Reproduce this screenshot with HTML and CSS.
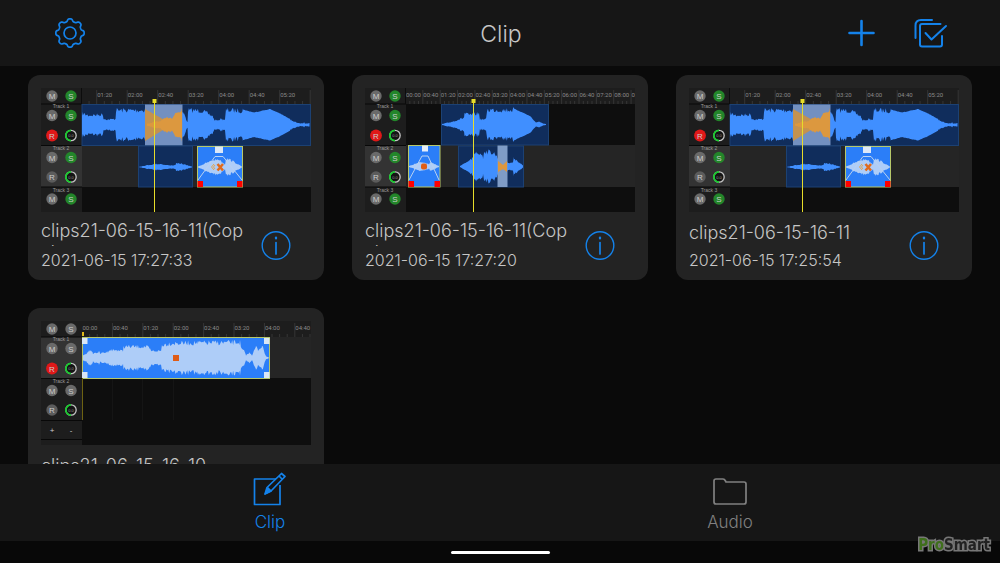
FILE: index.html
```
<!DOCTYPE html>
<html lang="en">
<head>
  <meta charset="UTF-8">
  <meta name="viewport" content="width=device-width, initial-scale=1.0">
  <title>Clip</title>
  <link rel="stylesheet" href="styles.css">
</head>
<body>
  <!-- shared drawings -->
  <svg class="defs" aria-hidden="true">
    <defs>
      <g id="btn-m"><circle r="5.7" fill="#6a6a6a"/><text class="btn-text" y="3">M</text></g>
      <g id="btn-s-off"><circle r="5.7" fill="#6a6a6a"/><text class="btn-text" y="3">S</text></g>
      <g id="btn-s"><circle r="5.7" fill="#23862a"/><text class="btn-text" y="3">S</text></g>
      <g id="btn-r"><circle r="5.7" fill="#5c5c5c"/><text class="btn-text" y="3">R</text></g>
      <g id="btn-rec"><circle r="5.9" fill="#e01818"/><text class="btn-text" y="3">R</text></g>
      <g id="knob">
        <circle r="5.2" fill="#141414" stroke="#c4c4c4" stroke-width="1.3"/>
        <path d="M0 5.2A5.2 5.2 0 0 1 0-5.2" fill="none" stroke="#16cc2c" stroke-width="1.7"/>
        <text class="knob-text" y="1.5">0.0</text>
      </g>
      <g id="info">
        <circle cx="15" cy="14.5" r="13.8" stroke-width="1.4"/>
        <path d="M15 11.5V23" stroke-width="1.7"/>
        <path d="M15 6.5V7.5" stroke-width="2.2"/>
      </g>

      <g id="heads">
        <rect width="41" height="124" fill="#1d1d1d"/>
        <rect y="57" width="41" height="42" fill="#333"/>
        <path d="M0 16H41M0 57.5H41M0 99H41" stroke="#080808"/>
        <path d="M40.5 0V16" stroke="#0c0c0c"/>
        <use href="#btn-m" x="11" y="8"/><use href="#btn-s" x="30" y="8"/>
        <text class="track" x="20" y="20">Track 1</text>
        <use href="#btn-m" x="11" y="27.5"/><use href="#btn-s" x="30" y="27.5"/>
        <use href="#btn-rec" x="11" y="47.5"/><use href="#knob" x="30" y="47.5"/>
        <text class="track" x="20" y="62">Track 2</text>
        <use href="#btn-m" x="11" y="69.5"/><use href="#btn-s" x="30" y="69.5"/>
        <use href="#btn-r" x="11" y="89"/><use href="#knob" x="30" y="89"/>
        <text class="track" x="20" y="104">Track 3</text>
        <use href="#btn-m" x="11" y="111"/><use href="#btn-s" x="30" y="111"/>
      </g>

      <g id="project-a">
        <rect width="270" height="124" fill="#1d1d1d"/>
        <rect x="41" y="57" width="229" height="42" fill="#252525"/>
        <rect x="41" y="99" width="229" height="25" fill="#0e0e0e"/>
        <use href="#heads"/>
        <g class="ruler" data-start="55.7" data-step="30.5" data-from="80" data-count="8" data-max="320"></g>
        <rect class="clip" x="41" y="16.5" width="228.5" height="41"/>
        <path class="wave" data-mid="36.8" data-env="41,13 48,11 62,12 62.5,7 68,6 74.5,7 75,17 104,17"/>
        <path class="wave" data-mid="36.8" data-env="141,15 143,13 145,7 146.5,3 147,17 161,16.5 172,10 173,6 176,5 180,7 184,6 185,17 202,16.5"/>
        <path class="wave" data-smooth data-mid="36.8" data-env="202,15.5 213,12.5 229,16 239,11.5 249,6"/>
        <path class="wave" data-mid="36.8" data-env="249,6 253,4 256,2 262,1.5 263,3 264,1.5 268.5,2"/>
        <rect x="104" y="16.5" width="37.5" height="41" fill="#7390c0"/>
        <path d="M104 21L127 34V39L104 53Z" fill="#c4924f"/>
        <path class="wave fade" data-mid="36.8" data-env="106,1 112,3 118,4 122,6 128,9 131,8 134,13 141,17"/>
        <rect class="clip" x="97.5" y="58" width="54" height="41"/>
        <path class="wave" data-mid="79" data-env="98,.3 106,2 115,3.5 121,3.5 123,2.5 128,2 134,2 135,4 140,4 151,.5"/>
        <rect class="clip picked" x="156.5" y="58.5" width="45" height="40.5"/>
        <path class="wave light" data-mid="79" data-env="157,.5 164,4 172,8 178,9 183,4 184,3 185,10 190,8 201,.5"/>
        <path class="envelope" d="M157 92L174 68.5H182L201 92"/>
        <rect x="174" y="58.5" width="8" height="6.5" fill="#dce8f8"/>
        <rect x="156.5" y="93" width="5.5" height="6" fill="#f00"/>
        <rect x="196" y="93" width="5.5" height="6" fill="#f00"/>
        <path d="M173 76l-2.5 3l2.5 3m1-5l-1.5 2l1.5 2" fill="none" stroke="#e2a551"/>
        <path d="M176.5 76l5.5 6.500m-5.5 0l5.5-6.5" fill="none" stroke="#e06a1c" stroke-width="2.5"/>
        <g class="playhead"><path d="M113 14h1V124h-1z"/><rect x="111.5" y="11" width="4" height="4"/></g>
      </g>
    </defs>
  </svg>

  <header class="topbar">
    <button class="icon-btn" aria-label="Settings">
      <svg width="30" height="30" viewBox="0 0 30 30"><path id="gear" d=""/><circle cx="15" cy="15" r="6"/></svg>
    </button>
    <h1>Clip</h1>
    <div class="actions">
      <button class="icon-btn" aria-label="Add">
        <svg width="26" height="30" viewBox="0 0 26 30"><path d="M13.500 3V27M1.500 15H25.500" stroke-width="2.6"/></svg>
      </button>
      <button class="icon-btn" aria-label="Select">
        <svg width="34" height="30" viewBox="0 0 34 30"><path d="M2.500 20V7.500Q2.500 2 8 2H19M27.500 6H9Q7 6 7 8V26.500Q7 28.500 9 28.500H27Q29 28.500 29 26.500V18M12.500 15L18.500 21.500L33 8" stroke-width="2"/></svg>
      </button>
    </div>
  </header>

  <main class="clips">
    <article class="card">
      <svg class="preview" viewBox="0 0 270 124"><use href="#project-a"/></svg>
      <div class="info">
        <div class="labels">
          <h2>clips21-06-15-16-11(Copy)</h2>
          <time>2021-06-15 17:27:33</time>
        </div>
        <button class="icon-btn" aria-label="Info"><svg width="30" height="30"><use href="#info"/></svg></button>
      </div>
    </article>

    <article class="card">
      <svg class="preview" viewBox="0 0 270 124">
        <rect width="270" height="124" fill="#1d1d1d"/>
        <rect x="41" y="16" width="229" height="41" fill="#0e0e0e"/>
        <rect x="41" y="57" width="229" height="42" fill="#252525"/>
        <rect x="41" y="99" width="229" height="25" fill="#0e0e0e"/>
        <use href="#heads"/>
        <g class="ruler tight" data-start="40.5" data-step="17.35" data-from="0" data-count="14" data-max="520"></g>
        <rect class="clip" x="76.5" y="16.5" width="107" height="40.5"/>
        <path class="wave" data-mid="36.5" data-env="77,.5 88,3.5 99,8 99.5,13 104,11 114,13 115,6 121,6 122,17 149,17"/>
        <path class="wave" data-smooth data-mid="36.5" data-env="149,16 158,12 166,8 168,5 171,2 174,3 178,1 181,.5"/>
        <rect class="clip" x="93.5" y="58" width="65" height="41"/>
        <path class="wave" data-mid="78.5" data-env="95,.5 102,5 107,9 111,16 117,15 118,9 119,18 129,16 133,10 138,5 143,5 145,4 148,5 149,10 158,1"/>
        <rect x="132.5" y="57.5" width="10" height="41.5" fill="#7f9cc6"/>
        <path d="M133 73L138 77L142 73V84L138 81L133 84Z" fill="#dd973f"/>
        <rect class="clip picked" x="43.5" y="57.5" width="31.5" height="41.5"/>
        <path class="wave light" data-mid="78.5" data-env="44,.5 50,3 56,5 62,4 64,3 65,5 69,3 74,.5"/>
        <path class="envelope" d="M44 92L57 68H63L74 92"/>
        <rect x="57" y="57.5" width="6" height="6" fill="#e6eefa"/>
        <rect x="43.5" y="93" width="5.5" height="6" fill="#f00"/>
        <rect x="69.5" y="93" width="5.5" height="6" fill="#f00"/>
        <rect x="56" y="75.5" width="6" height="6" rx="2" fill="#e05d14"/>
        <g class="playhead"><path d="M108 14h1V124h-1z"/><rect x="106.5" y="11" width="4" height="4"/></g>
      </svg>
      <div class="info">
        <div class="labels">
          <h2>clips21-06-15-16-11(Copy)</h2>
          <time>2021-06-15 17:27:20</time>
        </div>
        <button class="icon-btn" aria-label="Info"><svg width="30" height="30"><use href="#info"/></svg></button>
      </div>
    </article>

    <article class="card">
      <svg class="preview" viewBox="0 0 270 124"><use href="#project-a"/></svg>
      <div class="info">
        <div class="labels">
          <h2>clips21-06-15-16-11</h2>
          <time>2021-06-15 17:25:54</time>
        </div>
        <button class="icon-btn" aria-label="Info"><svg width="30" height="30"><use href="#info"/></svg></button>
      </div>
    </article>

    <article class="card">
      <svg class="preview" viewBox="0 0 270 124">
        <rect width="270" height="124" fill="#1d1d1d"/>
        <rect x="41" y="16" width="229" height="41" fill="#252525"/>
        <rect x="41" y="57" width="229" height="67" fill="#0e0e0e"/>
        <rect y="16" width="41" height="41" fill="#333"/>
        <path d="M0 16H41M0 57.5H41M0 99.5H41M0 118.5H41" stroke="#080808"/>
        <path d="M71.5 57V99M101.5 57V99M132.5 57V99" stroke="#151515"/>
        <use href="#btn-m" x="11" y="8"/><use href="#btn-s-off" x="30" y="8"/>
        <text class="track" x="20" y="20">Track 1</text>
        <use href="#btn-m" x="11" y="27.5"/><use href="#btn-s-off" x="30" y="27.5"/>
        <use href="#btn-rec" x="11" y="47.5"/><use href="#knob" x="30" y="47.5"/>
        <text class="track" x="20" y="62">Track 2</text>
        <use href="#btn-m" x="11" y="69.5"/><use href="#btn-s-off" x="30" y="69.5"/>
        <use href="#btn-r" x="11" y="89"/><use href="#knob" x="30" y="89"/>
        <text class="btn-text" x="11" y="112">+</text>
        <text class="btn-text" x="30" y="112">-</text>
        <g class="ruler" data-start="41" data-step="30.4" data-from="0" data-count="8" data-max="280"></g>
        <rect class="clip picked" x="41.5" y="16.5" width="187" height="41"/>
        <path class="wave light" data-mid="36.8" data-env="42,3 46,5 48,10 52,5 58,7 59,5 67,7 67.5,9 76,9 82,8 82.5,13 96,13 106,13 109,10 110,8 120,8 121,15 130,17 199,18 200,11 203,8 205,3 209,6 211,3 215,13 217,9 221,14 225,2 228,.3"/>
        <path d="M41 17h5.5v6H41zM41 51h5.5v6H41zM223 17h5.5v6H223zM223 51h5.5v6H223z" fill="#d9e6f6"/>
        <rect x="132" y="34" width="6" height="6" fill="#df5c17"/>
        <path d="M41.5 57V99" stroke="#6d6212"/>
        <rect x="41" y="11" width="2" height="4" fill="#e0b818"/>
      </svg>
      <div class="info">
        <div class="labels">
          <h2>clips21-06-15-16-10</h2>
          <time>2021-06-15 17:25:10</time>
        </div>
        <button class="icon-btn" aria-label="Info"><svg width="30" height="30"><use href="#info"/></svg></button>
      </div>
    </article>
  </main>

  <nav class="tabbar">
    <a class="tab active" href="#clip">
      <svg width="34" height="34" viewBox="0 0 34 34"><path d="M23 7H1.5V32.500H27V13"/><path d="M12 22L14 15.5L28.5 1.5L32 4.5L18 19ZM26 4L29.5 7.5"/><path d="M12.5 21.5L15 16L18 19Z" fill="#1482ea"/></svg>
      Clip
    </a>
    <a class="tab" href="#audio">
      <svg width="34" height="34" viewBox="0 0 34 34"><path d="M1 30V9Q1 7 3 7H10Q11.5 7 12.5 9L13 10H31Q33 10 33 12V30Q33 32 31 32H3Q1 32 1 30Z"/></svg>
      Audio
    </a>
  </nav>
  <footer class="home"><span></span></footer>
  <div class="watermark"><b>Pro</b>Smart</div>

  <script src="clips.js"></script>
</body>
</html>
```
FILE: styles.css
```
* { box-sizing: border-box; }
body { margin: 0; height: 100vh; display: flex; flex-direction: column; overflow: hidden; background: #0a0a0a; color: #c6c6c6; font-family: Inter, "Liberation Sans", sans-serif; font-weight: 300; }
button { background: none; border: none; padding: 0; cursor: pointer; }
h1, h2 { margin: 0; font-weight: 300; }
.defs { position: absolute; width: 0; height: 0; }

/* top bar */
.topbar { display: grid; grid-template-columns: 1fr auto 1fr; align-items: center; padding: 18px 53px 18px 55px; background: #161616; }
.topbar h1 { padding-top: 2px; font-size: 23px; line-height: 28px; }
.actions { display: flex; justify-content: flex-end; gap: 39px; }
.icon-btn { display: block; height: 30px; justify-self: start; }
.icon-btn svg { display: block; overflow: visible; fill: none; stroke: #1482ea; stroke-width: 1.7; stroke-linecap: round; stroke-linejoin: round; }

/* clip cards */
.clips { flex: 1; min-height: 0; overflow: hidden; display: grid; grid-template-columns: repeat(3, 1fr); align-content: start; gap: 28px; padding: 9px 28px 0; }
.card { background: #232323; border-radius: 12px; padding: 13px 13px 8px; }
.preview { display: block; width: 100%; }
.info { display: flex; justify-content: space-between; align-items: center; padding: 8px 20px 0 0; }
.labels { width: 204px; }
.labels h2 { display: grid; align-content: safe center; height: 26px; overflow: hidden; font-size: 18px; line-height: 22px; word-break: break-all; }
.labels time { display: block; margin-top: 2px; font-size: 16px; line-height: 24px; }

/* preview parts */
.btn-text { font: 8px "Liberation Sans", sans-serif; fill: #ccc; text-anchor: middle; }
.knob-text { font: 4px "Liberation Sans", sans-serif; fill: #999; text-anchor: middle; }
.track { font: 5px "Liberation Sans", sans-serif; fill: #999; text-anchor: middle; }
.ruler text { font: 6px Roboto, sans-serif; fill: #8a8a8a; }
.ruler path { stroke: #363636; fill: none; stroke-width: 1; }
.clip { fill: #102d5c; stroke: #1c4173; stroke-width: 1; }
.clip.picked { fill: #2b7ef8; stroke: #b7c86a; }
.wave { fill: #408fff; }
.wave.light { fill: #aecdf8; }
.wave.fade { fill: #dc983f; }
.envelope { fill: none; stroke: #b9d1f0; stroke-width: 1; }
.playhead { fill: #e6dc2a; }

/* bottom tabs */
.tabbar { display: flex; padding: 8px 40px 6px; background: #161616; }
.tab { flex: 1; display: flex; flex-direction: column; align-items: center; gap: 3px; color: #808080; font-size: 17px; line-height: 26px; text-decoration: none; }
.tab svg { fill: none; stroke: currentColor; stroke-width: 1.7; stroke-linejoin: round; }
.tab.active { color: #1482ea; }
.home { display: flex; justify-content: center; padding: 10px 0 9px; background: #080808; }
.home span { width: 99px; height: 3px; border-radius: 2px; background: #fff; }

.watermark { position: fixed; right: 10px; bottom: 8px; font: bold 15px/20px "DejaVu Sans Condensed", "DejaVu Sans", sans-serif; color: #222; -webkit-text-stroke: 3px #777; paint-order: stroke fill; }
.watermark b { color: #3f6f1c; }
```
FILE: clips.js
```
const SVG = 'http://www.w3.org/2000/svg';

// small repeatable noise so the waveforms look the same on every load
let seed = 7;
function noise() {
  seed = (seed * 16807) % 2147483647;
  return seed / 2147483647;
}

document.querySelectorAll('.wave').forEach(wave => {
  const mid = parseFloat(wave.dataset.mid);
  const rough = 'smooth' in wave.dataset ? 0.03 : 0.3;
  const points = wave.dataset.env.split(' ').map(p => p.split(',').map(Number));
  const top = [];
  const bottom = [];
  for (let i = 0; i < points.length - 1; i++) {
    const [x1, h1] = points[i];
    const [x2, h2] = points[i + 1];
    for (let x = x1; x < x2; x += 0.9) {
      const h = (h1 + (h2 - h1) * (x - x1) / (x2 - x1)) * (1 - noise() * rough);
      top.push(`${x} ${mid - h}`);
      bottom.unshift(`${x} ${mid + h}`);
    }
  }
  const [endX, endH] = points[points.length - 1];
  top.push(`${endX} ${mid - endH}`);
  bottom.unshift(`${endX} ${mid + endH}`);
  wave.setAttribute('d', `M${top.concat(bottom).join('L')}Z`);
});

document.querySelectorAll('.ruler').forEach(ruler => {
  const { start, step, from, count, max } = ruler.dataset;
  let ticks = '';
  for (let i = -1; i < count; i++) {
    const x = Number(start) + i * step;
    for (let k = 0; k < 4; k++) {
      const tx = x + k * step / 4;
      if (tx > 41 && tx < 270) ticks += `M${tx} ${k ? 13 : 2}V16`;
    }
    const seconds = Number(from) + i * 40;
    if (i < 0 || seconds > max) continue;
    const label = document.createElementNS(SVG, 'text');
    label.setAttribute('x', x + 0.5);
    label.setAttribute('y', 8.5);
    label.textContent = `${String(Math.floor(seconds / 60)).padStart(2, '0')}:${String(seconds % 60).padStart(2, '0')}`;
    ruler.append(label);
  }
  const path = document.createElementNS(SVG, 'path');
  path.setAttribute('d', ticks);
  ruler.prepend(path);
});

// settings gear outline with eight teeth
const gear = [];
for (let a = 0; a < 360; a += 3) {
  const rad = a * Math.PI / 180;
  const r = 12.9 + 1.3 * Math.tanh(2 * Math.cos(8 * rad));
  gear.push(`${15 + r * Math.sin(rad)} ${15 - r * Math.cos(rad)}`);
}
document.getElementById('gear').setAttribute('d', `M${gear.join('L')}Z`);
```
